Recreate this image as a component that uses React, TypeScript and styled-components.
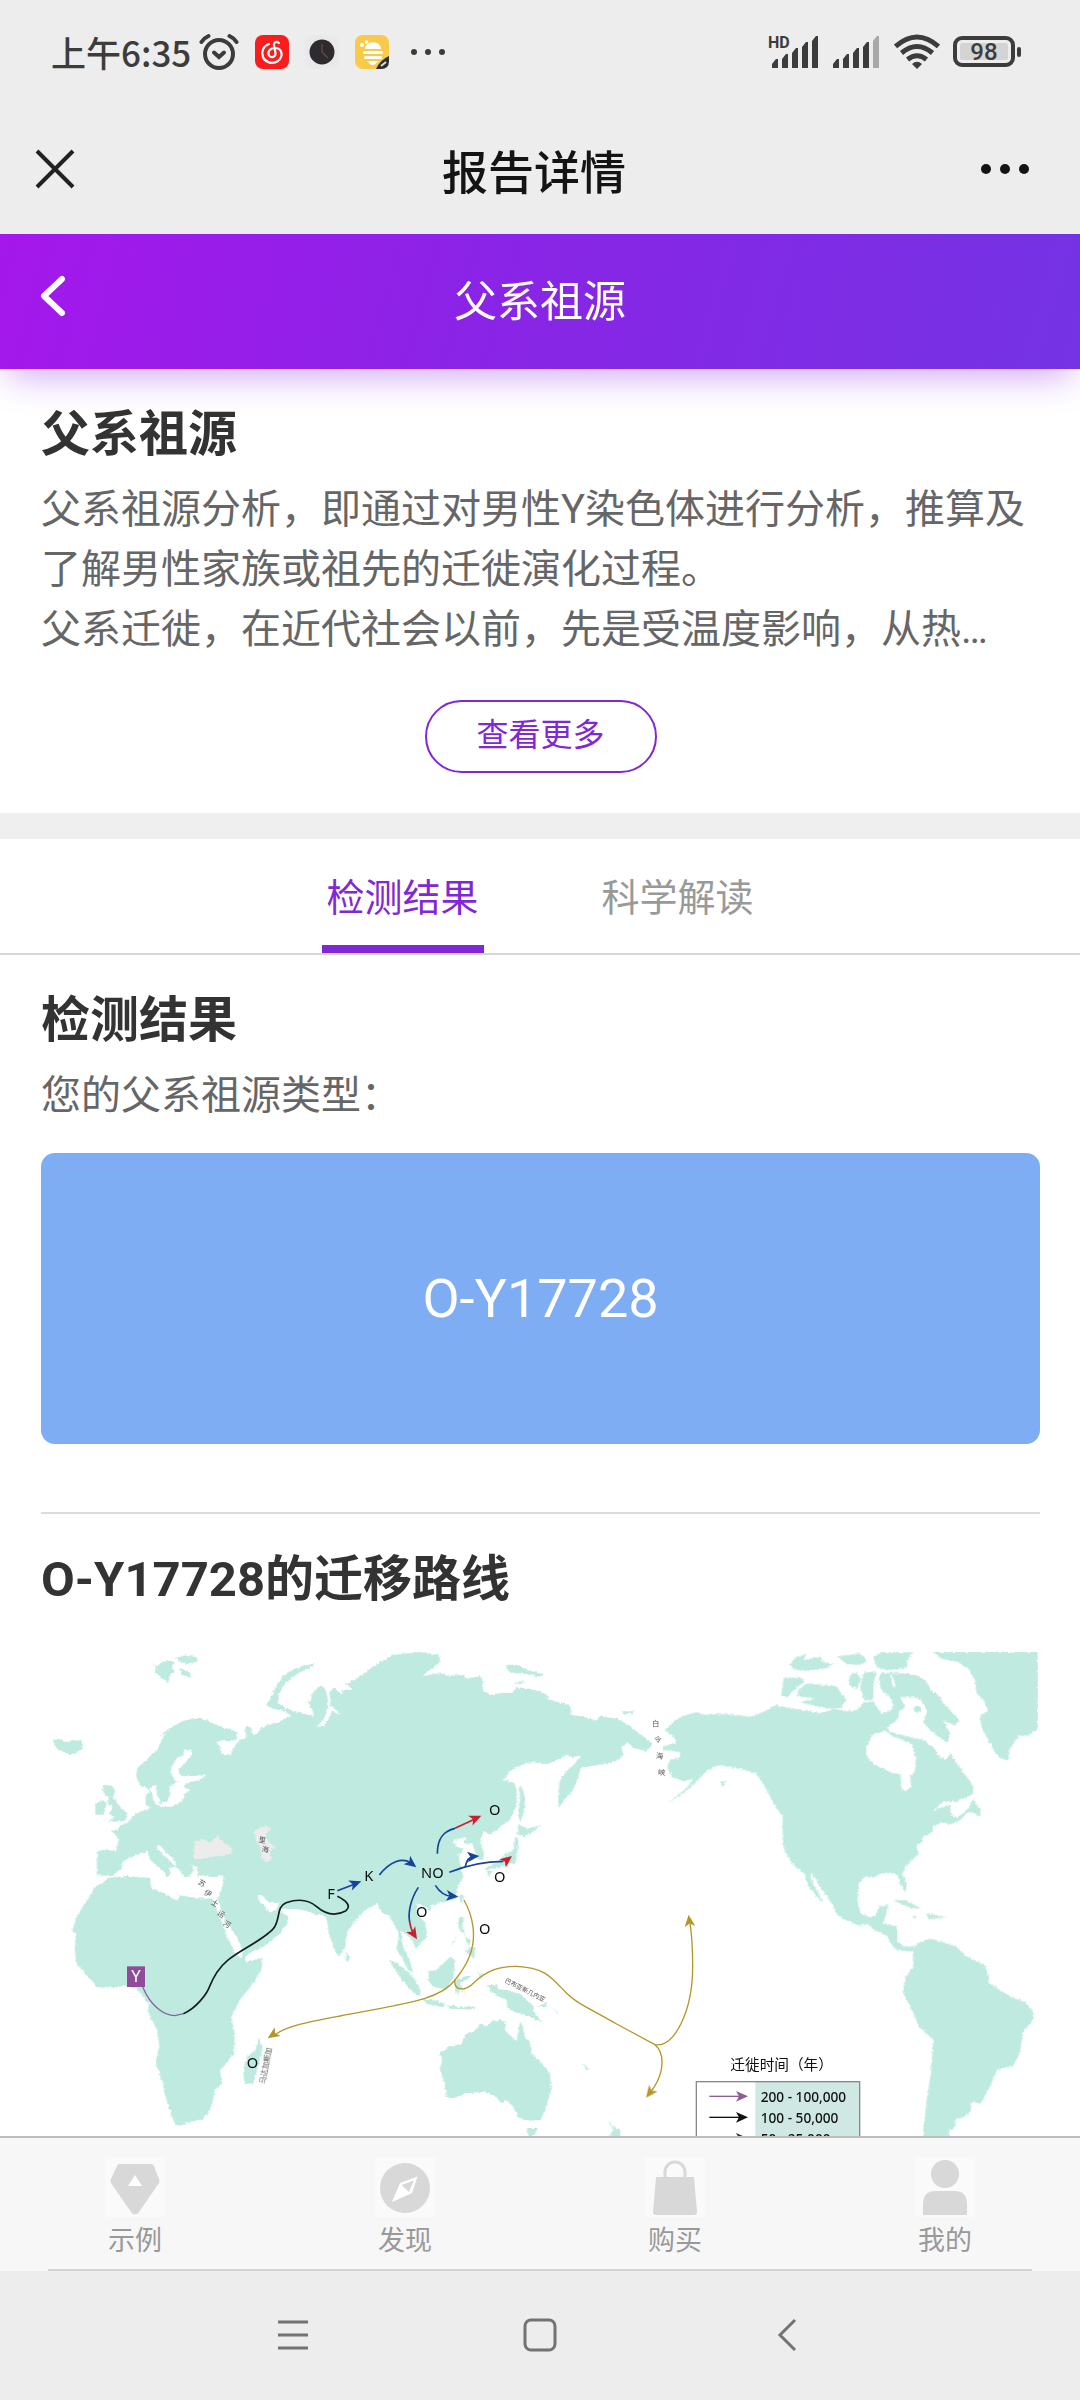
import React, { useState } from "react";
import styled, { createGlobalStyle } from "styled-components";

const GlobalStyle = createGlobalStyle`
  *, *::before, *::after { box-sizing: border-box; }
  body {
    margin: 0;
    background: #fff;
    font-family: Roboto, "Noto Sans CJK SC", sans-serif;
    color: #333;
  }
  h1, h2, p { margin: 0; }
  button { font-family: inherit; border: 0; padding: 0; background: none; cursor: pointer; }
`;

const Screen = styled.div`
  display: flex;
  flex-direction: column;
  height: 100vh;
  background: #fff;
`;

const StatusBar = styled.div`
  display: flex;
  justify-content: space-between;
  align-items: center;
  flex: none;
  height: 104px;
  padding: 0 58px 0 51px;
  background: #ededed;
  color: #3c3c3c;
`;

const StatusGroup = styled.div<{ $gap: number }>`
  display: flex;
  align-items: center;
  gap: ${(p) => p.$gap}px;
`;

const Clock = styled.span`
  font: 500 35px/50px "Noto Sans CJK SC", sans-serif;
`;

const StatusIcons = styled.div`
  display: flex;
  align-items: center;
  gap: 16px;
  margin-right: 14px;
`;

const TitleBar = styled.header`
  position: relative;
  z-index: 2;
  display: grid;
  grid-template-columns: 120px 1fr 132px;
  align-items: center;
  flex: none;
  height: 130px;
  background: #ededed;
`;

const TitleText = styled.h1`
  font: 500 46px/66px "Noto Sans CJK SC", sans-serif;
  text-align: center;
  color: #141414;
`;

const IconButton = styled.button<{ $side: "left" | "right" }>`
  display: flex;
  align-items: center;
  justify-content: ${(p) => (p.$side === "left" ? "flex-start" : "flex-end")};
  height: 100%;
  padding: ${(p) => (p.$side === "left" ? "0 0 0 35px" : "0 51px 0 0")};
`;

const PageHeader = styled.header`
  position: relative;
  z-index: 1;
  display: grid;
  grid-template-columns: 120px 1fr 120px;
  align-items: center;
  flex: none;
  height: 135px;
  background: linear-gradient(105deg, #a517ec 0%, #8a24e6 45%, #7433e4 100%);
  box-shadow: 0 14px 34px -8px rgba(138, 36, 230, 0.42);
`;

const PageTitle = styled.div`
  font-size: 43px;
  line-height: 60px;
  text-align: center;
  color: #fff;
`;

const Content = styled.main`
  flex: 1;
  min-height: 0;
  overflow-y: auto;
  scrollbar-width: none;
`;

const Section = styled.section`
  display: flex;
  flex-direction: column;
  padding: 36px 40px 0 41px;
`;

const Heading = styled.h2`
  font-size: 49px;
  line-height: 60px;
  font-weight: 700;
  color: #333;
`;

const Copy = styled.div`
  margin-top: 15px;
  font-size: 40px;
  line-height: 60px;
  color: #666;
`;

const MoreButton = styled.button`
  align-self: center;
  width: 232px;
  height: 73px;
  margin: 40px 0;
  padding-bottom: 4px;
  border: 2px solid #8128d6;
  border-radius: 37px;
  font-size: 32px;
  line-height: 46px;
  color: #8128d6;
`;

const Band = styled.div`
  height: 26px;
  background: #efefef;
`;

const Tabs = styled.div`
  display: flex;
  justify-content: center;
  gap: 113px;
  border-bottom: 2px solid #d6d6d8;
`;

const Tab = styled.button<{ $active: boolean }>`
  width: 162px;
  height: 114px;
  padding-top: 12px;
  border-bottom: 8px solid ${(p) => (p.$active ? "#8128d6" : "transparent")};
  font-size: 38px;
  line-height: 54px;
  color: ${(p) => (p.$active ? "#8128d6" : "#999")};
`;

const ResultCard = styled.div`
  display: flex;
  align-items: center;
  justify-content: center;
  height: 291px;
  margin: 27px 0 68px;
  border-radius: 14px;
  background: #7eadf4;
  font-size: 54px;
  line-height: 64px;
  color: #fff;
`;

const Rule = styled.hr`
  height: 2px;
  margin: 0 40px 0 41px;
  border: 0;
  background: #dcdcde;
`;

const MapFigure = styled.figure`
  margin: 41px 0 60px;

  svg { display: block; width: 100%; height: auto; }
`;

const BottomNav = styled.nav`
  display: grid;
  grid-template-columns: repeat(4, 1fr);
  flex: none;
  height: 135px;
  border-top: 2px solid #bdbdbf;
  background: #f7f7f7;
`;

const NavItem = styled.a`
  display: flex;
  flex-direction: column;
  align-items: center;
  gap: 4px;
  padding-top: 19px;
  font-size: 27px;
  line-height: 40px;
  text-decoration: none;
  color: #999;

  svg { background: #fafafa; }
`;

const SystemBar = styled.div`
  display: flex;
  justify-content: center;
  flex: none;
  height: 129px;
  background: #ededed;
`;

const SystemButton = styled.button`
  display: flex;
  align-items: center;
  justify-content: center;
  width: 247px;
  height: 128px;
`;

const NavRule = styled.div`
  flex: none;
  height: 2px;
  margin: -2px 48px 0;
  background: #d3d3d3;
`;

/* ---------- status bar icons ---------- */

const AlarmIcon = () => (
  <svg width="40" height="38" viewBox="0 0 40 38" fill="none" stroke="#3c3c3c" strokeLinecap="round">
    <circle cx="20" cy="21" r="14" strokeWidth="4" />
    <path d="M15 19.500 L20 24 L25 19.500" strokeWidth="4" />
    <path d="M2.500 9 Q5 5 9.500 3 M37.500 9 Q35 5 30.500 3" strokeWidth="4" />
  </svg>
);

const MusicIcon = () => (
  <svg width="34" height="34" viewBox="0 0 34 34" fill="none" stroke="#fff" strokeWidth="2.200" strokeLinecap="round">
    <rect width="34" height="34" rx="8" fill="#fb1d1d" stroke="none" />
    <path d="M14 9 C8 11 6 17 8 22 C10 27 17 30 23 26 C29 21 27 13 20 13 C15 13 12 17 14 20.500 C16 23.500 21 22 20.500 18 L19 10.500 C18.500 7 21.500 6 24 8" />
  </svg>
);

const DarkClockIcon = () => (
  <svg width="34" height="34" viewBox="0 0 34 34">
    <rect width="34" height="34" rx="8" fill="#e9e9e9" />
    <circle cx="17" cy="17" r="12.500" fill="#2d2b2d" />
    <path d="M17 9 V17 L23 23" stroke="#6b4a4c" strokeWidth="1.200" fill="none" />
  </svg>
);

const BeeIcon = () => (
  <svg width="34" height="34" viewBox="0 0 34 34">
    <rect width="34" height="34" rx="8" fill="#f8ca48" />
    <g fill="#fff">
      <path d="M10 14 C10 5 26 5 26 14 Z" />
      <circle cx="7" cy="10" r="2" />
      <circle cx="11.500" cy="7" r="1.800" />
      <rect x="8" y="16" width="20" height="3" rx="1.500" />
      <rect x="9" y="21" width="18" height="3" rx="1.500" />
      <path d="M12 26 H24 L19 30 H16 Z" />
    </g>
    <path d="M34 21 V26 Q34 34 26 34 H21 Q25 25 34 21Z" fill="#2b2d33" />
    <path d="M26 31 L31 27" stroke="#ddd" strokeWidth="2" />
  </svg>
);

const Dots = ({ size, gap, color }: { size: number; gap: number; color: string }) => (
  <svg width={size + gap * 2} height={size} viewBox={`0 0 ${size + gap * 2} ${size}`} fill={color} aria-hidden="true">
    {[0, 1, 2].map((i) => (
      <circle key={i} cx={size / 2 + gap * i} cy={size / 2} r={size / 2} />
    ))}
  </svg>
);

const BARS = [9, 14, 20, 26, 32];

const Bars = ({ faded = false, hd = false }: { faded?: boolean; hd?: boolean }) => (
  <svg width={hd ? 52 : 49} height="38" viewBox={hd ? "-4 -2 52 38" : "0 -2 49 38"} fill="#3c3c3c">
    {BARS.map((h, i) => (
      <path
        key={h}
        d={`M${i * 10 + 1} ${33} V${33 - h + 5} L${i * 10 + 5} ${33 - h} H${i * 10 + 7} V33 Z`}
        fill={faded && i === 4 ? "#a8a8a8" : "#3c3c3c"}
      />
    ))}
    {hd && (
      <text x="-3" y="13" fontSize="16" fontWeight="700" fontFamily="Roboto, sans-serif">
        HD
      </text>
    )}
  </svg>
);

const WifiIcon = () => (
  <svg width="46" height="36" viewBox="0 0 46 36" fill="none" stroke="#3c3c3c" strokeWidth="5">
    <path d="M1.500 12.500 Q23 -6.500 44.500 12.500" />
    <path d="M7.500 19 Q23 6 38.500 19" />
    <path d="M13.500 25.500 Q23 18 32.500 25.500" />
    <path d="M18 30 Q23 25.500 28 30 L23 35 Z" fill="#3c3c3c" stroke="none" />
  </svg>
);

const BatteryIcon = () => (
  <svg width="69" height="32" viewBox="0 0 69 32">
    <rect x="2" y="2" width="58" height="27" rx="7" fill="none" stroke="#3c3c3c" strokeWidth="4" />
    <rect x="7" y="7" width="48" height="17" rx="2" fill="#d4d4d4" />
    <rect x="64" y="11" width="4" height="10" rx="2" fill="#3c3c3c" />
    <text x="31" y="24" fontSize="24" fontWeight="500" fontFamily="Roboto, sans-serif" textAnchor="middle" fill="#3c3c3c">
      98
    </text>
  </svg>
);

/* ---------- bottom navigation icons ---------- */

const DiamondIcon = () => (
  <svg width="60" height="60" viewBox="0 0 60 60">
    <path d="M14 7 H46 Q48 7 49 9 L54 22 Q55 24 54 26 L34 55 Q30 60 26 55 L6 26 Q5 24 6 22 L12 9 Q13 7 14 7Z" fill="#d8d8d8" />
    <path d="M30 18 L37 29 H23Z" fill="#fff" />
  </svg>
);

const CompassIcon = () => (
  <svg width="60" height="60" viewBox="0 0 60 60">
    <circle cx="30" cy="31" r="25" fill="#d8d8d8" />
    <path d="M42.500 19.500 L37 36 L17 45 L25 26Z" fill="#fff" />
    <path d="M39 23.500 L34 35 L26.500 28Z" fill="#d8d8d8" />
  </svg>
);

const BagIcon = () => (
  <svg width="60" height="60" viewBox="0 0 60 60">
    <path d="M20 22 V15 A10 10 0 0 1 40 15 V22" fill="none" stroke="#d8d8d8" strokeWidth="3" />
    <path d="M11 20 H49 L52 55 Q52 58 49 58 H11 Q8 58 8 55Z" fill="#d8d8d8" />
  </svg>
);

const PersonIcon = () => (
  <svg width="60" height="60" viewBox="0 0 60 60" fill="#d8d8d8">
    <circle cx="30" cy="17" r="14" />
    <path d="M8 58 V47 Q8 34 21 34 H39 Q52 34 52 47 V58Z" />
  </svg>
);

/* ---------- migration map ---------- */

const LAND = "#beeae0";
const GOLD = "#b5962c";
const BLUE = "#17439b";
const RED = "#c8202f";

/* Each region keeps its own origin; dx shifts it into the shared map space. */
const WEST = [
  "172,632 200,630 228,634 236,600 222,578 210,572 232,570 240,556 262,548 282,524 300,516 336,504 318,494 316,468 330,452 316,442 300,438 288,410 292,384 318,362 334,344 352,330 364,300 376,282 360,290 384,268 404,256 430,242 460,238 480,234 500,240 520,250 544,262 572,268 592,278 590,298 570,304 530,304 540,320 548,342 572,344 580,322 598,300 618,292 616,262 632,260 636,284 650,282 664,264 690,252 714,248 740,232 752,226 730,212 700,206 678,196 690,178 706,144 728,108 760,88 800,76 822,68 820,78 790,92 756,112 730,138 714,168 714,190 740,206 760,212 790,220 818,228 820,212 806,196 812,170 828,146 846,136 858,154 864,180 862,212 850,240 830,260 852,258 864,240 876,212 900,224 884,206 870,196 868,160 880,144 910,166 904,150 940,150 914,132 960,110 1000,78 1020,68 1060,66 1100,420 1100,760 1040,790 1010,792 980,808 940,850 920,880 916,920 896,952 880,920 866,880 862,840 848,824 830,826 800,812 770,808 720,806 728,820 748,830 740,856 710,890 670,920 616,946 616,966 668,954 664,990 640,1030 600,1080 574,1130 584,1180 582,1240 540,1290 546,1330 524,1350 516,1400 490,1436 440,1450 408,1458 396,1430 376,1370 366,1320 346,1266 358,1220 352,1170 324,1120 326,1090 290,1046 246,1034 240,1042 170,1042 140,1006 108,970 104,930 108,880 96,874 110,830 136,790 166,740 196,722 206,712 170,708",
  "186,438 214,434 226,454 218,470 240,500 262,520 256,544 204,546 222,530 206,520 218,500 204,494 206,470 192,462",
  "166,490 190,480 200,490 192,524 166,524",
  "40,300 64,296 72,306 124,300 130,326 92,344 56,330 44,318",
  "336,70 350,78 380,60 404,66 396,80 404,92 390,108 384,130 376,116 364,118 356,104 340,92 352,88",
  "404,54 440,46 472,52 470,66 430,72",
  "420,84 450,98 452,112 424,104",
  "918,936 930,950 926,966 916,960",
  "656,1194 668,1220 660,1260 640,1330 612,1332 610,1290 620,1250 646,1230",
];

const EAST = [
  "100,90 120,66 160,46 200,40 240,36 296,44 300,66 276,86 246,108 300,100 330,108 370,104 376,116 420,108 432,124 428,150 450,164 490,158 516,160 530,142 580,148 620,164 626,178 690,196 694,224 730,230 770,242 780,228 830,236 866,256 906,288 938,312 920,334 880,324 862,308 844,322 852,344 826,364 790,372 740,380 722,384 712,420 700,450 680,470 656,506 654,470 660,420 680,392 700,376 724,346 700,352 676,346 650,362 620,372 570,366 520,384 488,420 524,430 532,460 528,500 510,540 480,560 452,584 432,574 420,600 432,640 430,660 412,656 404,630 396,610 370,610 380,592 364,594 336,604 350,620 372,626 356,644 362,680 370,710 350,748 350,776 300,790 270,796 272,815 252,800 230,790 232,820 256,850 262,890 240,910 228,928 216,900 196,880 184,872 188,920 206,950 220,1000 204,990 190,960 170,930 176,880 160,850 144,826 128,820 110,790 84,806 60,760 60,200",
  "500,74 530,74 560,90 610,102 600,110 560,102 520,98 500,90",
  "524,126 550,124 550,132 524,130",
  "846,214 880,214 876,222 850,220",
  "538,438 546,440 556,480 550,520 540,548 534,520 540,480",
  "536,552 560,566 606,554 580,574 550,592 532,584",
  "526,590 536,596 532,640 526,668 500,674 470,684 440,690 436,682 470,668 500,640 520,630",
  "440,692 456,692 446,714",
  "360,766 370,764 366,790 358,780",
  "358,830 372,832 366,860 376,886 360,872 354,850",
  "388,920 404,924 404,956 392,948 376,936",
  "372,890 392,900 388,918",
  "352,886 344,904 328,924",
  "264,992 290,990 330,950 346,960 340,1010 320,1050 286,1042 268,1030",
  "146,960 170,968 220,1010 242,1050 240,1070 210,1050 180,1010",
  "244,1076 290,1082 316,1092 310,1102 260,1092",
  "320,1096 360,1100 412,1100 400,1108 330,1106",
  "348,1020 380,1008 396,1008 360,1030 376,1060 360,1046 354,1068 346,1050",
  "414,998 426,1000 424,1018",
  "440,1036 470,1034 476,1048 500,1050 540,1062 580,1096 582,1116 606,1148 580,1136 550,1122 520,1116 500,1100 500,1080 464,1064",
  "590,1100 620,1088 618,1102",
  "640,1106 656,1118 648,1118",
  "726,1266 750,1290 740,1290",
  "300,1240 320,1224 366,1210 378,1180 400,1176 420,1152 440,1160 460,1140 470,1146 480,1136 498,1150 494,1170 530,1204 540,1144 548,1160 556,1196 570,1206 574,1240 600,1264 630,1300 634,1350 618,1400 602,1440 570,1442 534,1432 520,1400 498,1380 484,1390 466,1368 430,1356 380,1360 340,1374 318,1374 316,1340 300,1286 306,1262",
  "560,1464 594,1464 580,1490 566,1488",
  "800,1434 820,1462 842,1470 840,1500 810,1530 806,1490 820,1470",
];

const AMERICAS = [
  "14,270 36,250 44,240 80,224 110,216 130,224 200,222 270,230 310,216 346,196 400,206 440,212 480,220 520,206 560,214 590,210 612,186 640,184 650,200 664,220 690,212 700,196 690,172 664,150 656,120 662,100 700,98 768,104 800,124 812,150 840,170 850,190 898,240 884,256 850,240 870,280 864,306 830,300 828,340 856,360 872,340 890,370 930,424 940,440 938,464 890,484 850,484 816,514 846,500 870,496 872,520 890,534 924,506 930,512 900,540 866,556 850,544 820,560 818,578 790,590 782,610 768,614 776,640 740,676 728,700 740,740 736,758 720,730 712,704 690,698 660,702 640,712 614,710 596,730 592,790 604,820 630,832 650,822 656,798 684,796 676,830 670,850 712,858 712,904 730,920 758,918 764,934 744,934 710,930 692,910 684,890 640,868 620,852 600,858 560,842 530,824 520,796 480,740 456,700 450,712 492,792 480,782 446,740 432,700 400,676 372,630 368,590 368,530 340,490 320,450 290,400 230,384 176,376 140,392 110,424 70,460 24,490 84,440 100,416 70,424 36,410 22,380 30,360 60,352 60,336 10,330 10,320 50,306 40,290",
  "416,150 440,130 480,134 530,140 560,180 540,204 500,206 450,194 420,186 466,176 410,168",
  "370,114 420,112 436,124 400,150 384,172 360,166 368,146",
  "386,76 410,50 440,42 430,60 480,50 490,66 520,74 500,84 440,92 410,90",
  "530,50 600,40 620,60 600,76 560,72",
  "640,50 664,38 760,38 740,60 744,82 690,90 650,82",
  "570,104 590,98 602,120 592,146 568,136",
  "612,98 650,94 640,130 640,180 612,180 600,140",
  "180,424 198,424 186,442",
  "820,37 1134,37 1134,264 1110,284 1076,288 1050,326 1044,364 1010,346 984,300 964,260 960,226 984,212 970,180 950,160 944,120 924,84 890,64 850,58",
  "940,476 948,492 962,510 960,530 940,518 918,516",
  "700,780 736,780 784,806 756,804 720,790",
  "800,820 862,832 806,838",
  "756,826 772,830 764,836",
  "758,950 764,916 790,902 812,896 860,910 890,920 920,950 976,976 990,1030 1050,1070 1090,1084 1114,1104 1120,1136 1088,1180 1080,1240 1060,1276 1010,1290 990,1340 962,1390 930,1386 934,1410 916,1430 884,1440 888,1460 868,1470 864,1560 800,1560 790,1470 800,1380 812,1300 820,1200 776,1160 756,1110 728,1056 734,1016 760,980",
];

const WEST_SEAS = [
  "140,704 200,714 260,708 330,714 334,744 372,760 412,784 418,766 470,774 500,776 536,772 548,734 550,706 520,712 486,706 474,710 470,680 452,672 462,690 448,712 430,710 420,690 408,684 406,664 384,642 358,614 350,622 368,644 392,664 406,680 388,684 392,704 380,712 374,696 350,678 330,658 322,634 300,640 276,650 246,668 244,684 220,708",
  "432,328 456,330 452,350 430,372 416,392 424,408 450,408 498,406 480,420 440,428 432,440 452,452 436,460 426,484 396,500 362,500 352,494 384,482 392,460 388,440 410,426 394,404 394,380 414,352 430,344",
  "328,446 346,432 352,466 362,482 352,500 340,480 336,458",
  "510,766 530,772 556,840 572,864 590,890 608,930 604,956 584,936 560,890 552,860",
  "652,766 664,764 690,790 716,788 712,806 690,818 676,800 660,786",
];

const AMERICAS_SEAS = [
  "620,320 636,286 676,272 700,290 730,300 756,310 768,360 764,396 750,410 752,440 738,454 724,444 722,404 690,396 640,372 618,344",
  "710,240 720,214 736,200 720,172 740,170 780,176 802,214 790,246 820,280 870,312 830,330 790,300 744,290 690,276 680,262",
  "690,104 698,140 708,140 696,104",
];

const LAKES = [
  "458,640 466,604 486,596 504,606 520,600 534,584 540,600 560,612 578,628 572,642 540,648 510,650 480,658 458,656",
  "642,576 664,560 692,558 690,574 676,584 684,604 706,622 690,632 694,656 680,666 664,652 660,620 648,600",
];

const Shapes = ({ list, dx, fill }: { list: string[]; dx: number; fill: string }) => (
  <g transform={`translate(${dx} 0)`} fill={fill}>
    {list.map((points) => (
      <polygon key={points} points={points} />
    ))}
  </g>
);

/* Arrow head whose tip sits on (x, y) and points along the given angle. */
const Head = ({ x, y, angle, color }: { x: number; y: number; angle: number; color: string }) => (
  <path d="M0 0 L-36 -16 L-27 0 L-36 16Z" fill={color} transform={`translate(${x} ${y}) rotate(${angle})`} />
);

const MARKS: [string, number, number][] = [
  ["F", 862, 777],
  ["K", 973, 722],
  ["NO", 1143, 713],
  ["O", 1347, 526],
  ["O", 1362, 725],
  ["O", 1128, 830],
  ["O", 1317, 881],
  ["O", 620, 1284],
];

const STRAITS: [string, number, number, number][] = [
  ["白", 1847, 258, 0],
  ["令", 1853, 306, 5],
  ["海", 1858, 356, 5],
  ["峡", 1864, 405, 5],
  ["苏", 482, 737, 30],
  ["伊", 500, 767, 30],
  ["士", 520, 797, 30],
  ["运", 540, 829, 30],
  ["河", 557, 859, 30],
  ["里", 666, 608, 8],
  ["海", 675, 636, 8],
];

const LEGEND = [
  { label: "200 - 100,000", color: "#8b5f95" },
  { label: "100 - 50,000", color: "#111" },
  { label: "50 - 25,000", color: "#333" },
];

const MigrationMap = () => (
  <svg viewBox="3 33 2997 1560" role="img" aria-label="O-Y17728的迁移路线">
    <defs>
      <filter id="coast" x="0" y="0" width="100%" height="100%">
        <feTurbulence type="fractalNoise" baseFrequency="0.12" numOctaves="2" seed="4" />
        <feDisplacementMap in="SourceGraphic" scale="11" xChannelSelector="R" yChannelSelector="G" />
      </filter>
    </defs>

    <g filter="url(#coast)">
      <Shapes list={WEST} dx={0} fill={LAND} />
      <Shapes list={EAST} dx={900} fill={LAND} />
      <Shapes list={AMERICAS} dx={1860} fill={LAND} />
      <Shapes list={WEST_SEAS} dx={0} fill="#fff" />
      <Shapes list={AMERICAS_SEAS} dx={1860} fill="#fff" />
      <Shapes list={LAKES} dx={0} fill="#ececec" />
      <circle cx="2632" cy="208" r="10" fill={LAND} />
    </g>

    <g fill="none" strokeWidth="4">
      <path d="M308 1040 C330 1095 370 1127 405 1127 L430 1121" stroke="#7f6a9c" />
      <path
        d="M430 1121 C470 1105 500 1060 506 1046 C520 1010 540 980 562 962 C600 930 670 900 700 866 C722 840 708 800 738 788 C780 774 810 782 830 800 C860 826 890 828 918 812 C936 796 915 780 892 769"
        stroke="#12201f"
        strokeWidth="5"
      />
      <g stroke={BLUE} strokeWidth="5">
        <path d="M892 752 L945 732" />
        <path d="M1018 705 C1050 665 1085 652 1112 668" />
        <path d="M1192 641 C1192 590 1215 572 1245 565" />
        <path d="M1228 697 C1280 676 1330 664 1390 664" />
        <path d="M1275 682 C1280 660 1288 650 1300 650" />
        <path d="M1186 736 C1200 758 1215 768 1235 769" />
        <path d="M1135 742 C1110 780 1104 820 1109 846" />
      </g>
      <g stroke={RED} strokeWidth="5">
        <path d="M1245 565 L1305 537" />
        <path d="M1109 846 C1112 862 1114 870 1120 880" />
      </g>
      <g stroke={GOLD}>
        <path d="M1272 780 C1300 830 1310 890 1290 945 C1275 985 1260 1000 1245 1020 C1200 1080 1100 1090 900 1128 C800 1147 740 1158 705 1184" />
        <path d="M1245 1018 C1240 1050 1270 1055 1295 1034 C1340 990 1380 978 1430 979 C1520 982 1540 1020 1580 1060 C1610 1090 1640 1100 1730 1152 L1845 1214 C1905 1222 1958 1110 1958 980 C1958 920 1955 880 1950 850" />
        <path d="M1845 1214 C1875 1240 1875 1300 1832 1356" />
      </g>
    </g>

    <Head x={964} y={724} angle={-20} color={BLUE} />
    <Head x={1129} y={682} angle={38} color={BLUE} />
    <Head x={1318} y={648} angle={-5} color={BLUE} />
    <Head x={1255} y={770} angle={6} color={BLUE} />
    <Head x={1324} y={527} angle={-24} color={RED} />
    <Head x={1416} y={648} angle={-38} color={RED} />
    <Head x={1131} y={898} angle={58} color={RED} />
    <Head x={683} y={1195} angle={146} color={GOLD} />
    <Head x={1946} y={824} angle={-96} color={GOLD} />
    <Head x={1818} y={1373} angle={128} color={GOLD} />

    <g fontFamily='"Noto Sans", sans-serif' fontSize="44" fill="#0a0a0a">
      {MARKS.map(([label, x, y]) => (
        <text key={`${x}-${y}`} x={x} y={y}>
          {label}
        </text>
      ))}
    </g>
    <rect x="261" y="979" width="54" height="62" fill="#8f4c99" />
    <text x="288" y="1027" fontFamily='"Noto Sans", sans-serif' fontSize="50" textAnchor="middle" fill="#fff">
      Y
    </text>

    <g fontFamily='"Noto Sans CJK SC", sans-serif' fontSize="22" fill="#555" textAnchor="middle">
      {STRAITS.map(([label, x, y, angle]) => (
        <text key={`${x}-${y}`} x={x} y={y} transform={`rotate(${angle} ${x} ${y})`}>
          {label}
        </text>
      ))}
      <text transform="translate(684 1278) rotate(-79)">马达加斯加</text>
      <text fontSize="19" transform="translate(1452 1056) rotate(27)">
        巴布亚新几内亚
      </text>
    </g>

    <text x="2071" y="1290" fontFamily='"Noto Sans CJK SC", sans-serif' fontSize="44" fill="#111">
      迁徙时间（年）
    </text>
    <rect x="1969" y="1325" width="490" height="210" fill="#fff" />
    <rect x="2146" y="1325" width="313" height="210" fill="#cfe8e3" />
    <rect x="1969" y="1325" width="490" height="210" fill="none" stroke="#85898c" strokeWidth="4" />
    {LEGEND.map(({ label, color }, i) => (
      <g key={label}>
        <path d={`M2008 ${1369 + i * 63} H2100`} stroke={color} strokeWidth="4" />
        <Head x={2124} y={1369 + i * 63} angle={0} color={color} />
        <text x="2162" y={1385 + i * 63} fontFamily='"Noto Sans", sans-serif' fontSize="41" fontWeight="500" fill="#111">
          {label}
        </text>
      </g>
    ))}
  </svg>
);

const NAV = [
  { label: "示例", Icon: DiamondIcon },
  { label: "发现", Icon: CompassIcon },
  { label: "购买", Icon: BagIcon },
  { label: "我的", Icon: PersonIcon },
];

const TABS = ["检测结果", "科学解读"];

export default function App() {
  const [tab, setTab] = useState(0);

  return (
    <Screen>
      <GlobalStyle />
      <StatusBar>
        <StatusGroup $gap={8}>
          <Clock>上午6:35</Clock>
          <StatusIcons>
            <AlarmIcon />
            <MusicIcon />
            <DarkClockIcon />
            <BeeIcon />
          </StatusIcons>
          <Dots size={6} gap={14} color="#3c3c3c" />
        </StatusGroup>
        <StatusGroup $gap={13}>
          <Bars hd />
          <Bars faded />
          <WifiIcon />
          <BatteryIcon />
        </StatusGroup>
      </StatusBar>

      <TitleBar>
        <IconButton $side="left" aria-label="关闭">
          <svg width="40" height="40" viewBox="0 0 40 40" stroke="#222" strokeWidth="4">
            <path d="M2 2 L38 38 M38 2 L2 38" />
          </svg>
        </IconButton>
        <TitleText>报告详情</TitleText>
        <IconButton $side="right" aria-label="更多">
          <Dots size={10} gap={19} color="#141414" />
        </IconButton>
      </TitleBar>

      <PageHeader>
        <IconButton $side="left" aria-label="返回">
          <svg width="34" height="54" viewBox="0 0 34 54" fill="none" stroke="#fff" strokeWidth="6" strokeLinecap="round" strokeLinejoin="round">
            <path d="M27 4 L9 21 L27 38" />
          </svg>
        </IconButton>
        <PageTitle>父系祖源</PageTitle>
      </PageHeader>

      <Content>
        <Section>
          <Heading>父系祖源</Heading>
          <Copy>
            <p>父系祖源分析，即通过对男性Y染色体进行分析，推算及了解男性家族或祖先的迁徙演化过程。</p>
            <p>父系迁徙，在近代社会以前，先是受温度影响，从热…</p>
          </Copy>
          <MoreButton>查看更多</MoreButton>
        </Section>
        <Band />
        <Tabs role="tablist">
          {TABS.map((label, i) => (
            <Tab key={label} role="tab" aria-selected={tab === i} $active={tab === i} onClick={() => setTab(i)}>
              {label}
            </Tab>
          ))}
        </Tabs>
        <Section>
          <Heading>检测结果</Heading>
          <Copy>您的父系祖源类型：</Copy>
          <ResultCard>O-Y17728</ResultCard>
        </Section>
        <Rule />
        <Section>
          <Heading>O-Y17728的迁移路线</Heading>
          <MapFigure>
            <MigrationMap />
          </MapFigure>
        </Section>
      </Content>

      <BottomNav>
        {NAV.map(({ label, Icon }) => (
          <NavItem key={label} href="#">
            <Icon />
            {label}
          </NavItem>
        ))}
      </BottomNav>
      <NavRule />
      <SystemBar>
        <SystemButton aria-label="最近任务">
          <svg width="32" height="30" viewBox="0 0 32 30" stroke="#737373" strokeWidth="3">
            <path d="M1 2 H31 M1 15 H31 M1 28 H31" />
          </svg>
        </SystemButton>
        <SystemButton aria-label="主屏幕">
          <svg width="34" height="34" viewBox="0 0 34 34" fill="none" stroke="#737373" strokeWidth="3">
            <rect x="2" y="2" width="30" height="30" rx="6" />
          </svg>
        </SystemButton>
        <SystemButton aria-label="返回上一页">
          <svg width="20" height="34" viewBox="0 0 20 34" fill="none" stroke="#737373" strokeWidth="3">
            <path d="M18 2 L3 17 L18 32" />
          </svg>
        </SystemButton>
      </SystemBar>
    </Screen>
  );
}
